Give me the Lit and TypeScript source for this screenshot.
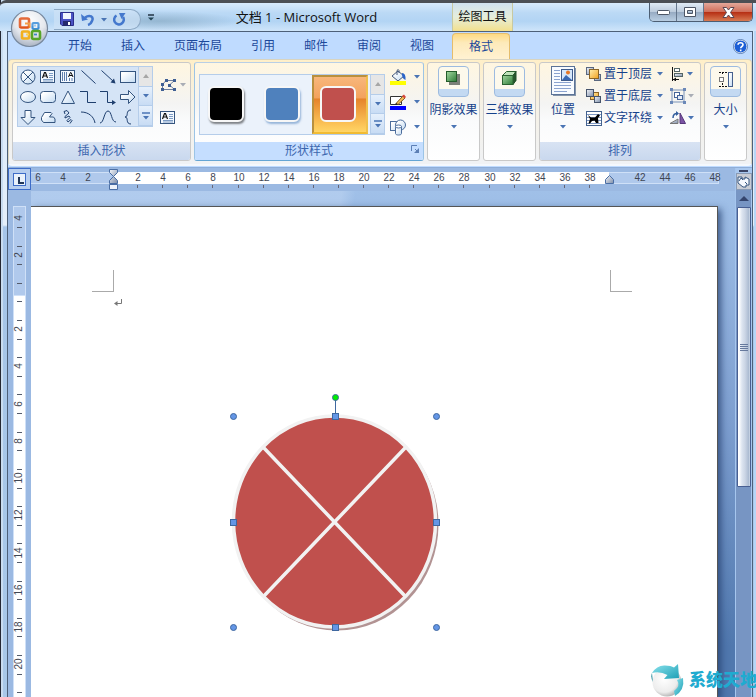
import { LitElement, html, svg, css } from "lit";
import { customElement } from "lit/decorators.js";

const INK = "#1f3f6e";
const defs = svg`<defs>
  <linearGradient id="f" x1="0" y1="0" x2="1" y2="1"><stop offset="0.2" stop-color="#fff"/><stop offset="1" stop-color="#c3dbf2"/></linearGradient>
  <linearGradient id="o" x1="0" y1="0" x2="1" y2="1"><stop offset="0" stop-color="#fff0b0"/><stop offset="1" stop-color="#f2a21f"/></linearGradient>
  <linearGradient id="g" x1="0" y1="0" x2="1" y2="1"><stop offset="0" stop-color="#f4f6fa"/><stop offset="1" stop-color="#7c8da8"/></linearGradient>
  <linearGradient id="n" x1="0" y1="0" x2="1" y2="1"><stop offset="0" stop-color="#a5d8a2"/><stop offset="1" stop-color="#2c7a35"/></linearGradient>
</defs>`;

const icon = (w: number, h: number, body: unknown) =>
  html`<svg width=${w} height=${h} viewBox="0 0 ${w} ${h}" aria-hidden="true">${defs}${body}</svg>`;

const arrow = (dim = false) =>
  html`<svg class="arrow" width="6" height="4" viewBox="0 0 6 4" aria-hidden="true"><path d="M0 0h6L3 3.5z" fill=${dim ? "#a9adb5" : "#4a74b4"}/></svg>`;

const textBox = svg`<rect x=".5" y="1.5" width="14" height="12" fill="#f4f9ff" stroke="#35557f"/>
  <path d="M9 4.5h4M9 6.5h4M9 8.5h4M3 10.5h10M3 12h10" stroke="#7d9cc4"/>
  <path d="M2.5 9L4.5 3.5h1L7.5 9M3.5 7h3" fill="none" stroke="#111" stroke-width="1.2"/>`;

const shapes: [string, unknown][] = [
  ["流程图: 汇总连接", svg`<circle cx="8" cy="8" r="7" fill="url(#f)" stroke="#35557f"/><path d="M3 3l10 10M13 3L3 13" stroke="#35557f"/>`],
  ["文本框", textBox],
  ["竖排文本框", svg`<rect x=".5" y="1.5" width="14" height="12" fill="#f4f9ff" stroke="#35557f"/><path d="M2.500 3v9M4.500 3v9M6.500 3v9M9.500 9v3M12 9v3" stroke="#5f7fae"/><path d="M8.500 8L10.500 3.500h.5L13 8M9 6.500h3.500" fill="none" stroke="#111"/>`],
  ["直线", svg`<path d="M1.500 1.500l14 13" stroke=${INK}/>`],
  ["箭头", svg`<path d="M1.500 1.500l12 11" stroke=${INK}/><path d="M15.500 14.500l-5-1 3.500-4z" fill=${INK}/>`],
  ["矩形", svg`<rect x=".5" y="2.500" width="15" height="11" fill="url(#f)" stroke="#35557f"/>`],
  ["椭圆", svg`<ellipse cx="8" cy="8" rx="7.500" ry="5.500" fill="url(#f)" stroke="#35557f"/>`],
  ["圆角矩形", svg`<rect x=".5" y="2.500" width="15" height="11" rx="3" fill="url(#f)" stroke="#35557f"/>`],
  ["等腰三角形", svg`<path d="M8 2L14.500 14.500h-13z" fill="url(#f)" stroke="#35557f"/>`],
  ["肘形连接符", svg`<path d="M0 2.500h7.500v11H16" fill="none" stroke=${INK}/>`],
  ["肘形箭头连接符", svg`<path d="M0 2.500h7.500v11H13" fill="none" stroke=${INK}/><path d="M16 13.500l-4 2.500v-5z" fill=${INK}/>`],
  ["右箭头", svg`<path d="M.5 5.500h8v-4l6.500 6.500-6.500 6.500v-4h-8z" fill="url(#f)" stroke="#35557f"/>`],
  ["下箭头", svg`<path d="M5 1.500h6v7h4L8 15.500 1 8.500h4z" fill="url(#f)" stroke="#35557f"/>`],
  ["任意多边形", svg`<path d="M3.500 13.500L1.500 11V8.500l3-5h6.500l1 1-2.500 3.500h4l1.500 2v3.500z" fill="url(#f)" stroke="#35557f"/>`],
  ["自由曲线", svg`<path d="M5 5L4 2.500 7 1.500 9 4 5 7.500v1.500l4-2 1 1.500-3 3 1 1.500 3-2.500 1 1-2 3" fill="none" stroke=${INK}/>`],
  ["弧形", svg`<path d="M1 3c8 0 13 5 14 11" fill="none" stroke=${INK}/>`],
  ["曲线", svg`<path d="M0 14C4 14 4 2 8 2s3 11 8 11" fill="none" stroke=${INK}/>`],
  ["左大括号", svg`<path d="M11 1C5 1 9 8 5 8c4 0 0 7 6 7" fill="none" stroke=${INK}/>`],
];

const spinner = () => html`<div class="spin">
  <button aria-label="上一行" class="off"><svg width="6" height="4" viewBox="0 0 6 4"><path d="M0 4h6L3 0z" fill="#a6a6a6"/></svg></button>
  <button aria-label="下一行">${arrow()}</button>
  <button aria-label="其他"><svg width="8" height="8" viewBox="0 0 8 8"><path d="M0 1h8" stroke="#4a74b4" stroke-width="1.500"/><path d="M1 4h6L4 7.500z" fill="#4a74b4"/></svg></button>
</div>`;

const ic = {
  edit: icon(18, 14, svg`<path d="M2.500 12V6.500L6 2.500h8.500L9.500 7l5 4.500H3" fill="none" stroke="#6d7f9e"/><g fill="#3f5f94"><rect x="1" y="5" width="3" height="3"/><rect x="5" y="1" width="3" height="3"/><rect x="13" y="1" width="3" height="3"/><rect x="8" y="6" width="3" height="3"/><rect x="1" y="10" width="3" height="3"/><rect x="13" y="10" width="3" height="3"/></g>`),
  fill: icon(17, 16, svg`<path d="M2 7l6-5 6 5-6 5z" fill="url(#f)" stroke="#44597c"/><path d="M7 6V1.500q1.500-2 2 0V4" fill="none" stroke="#44597c"/><path d="M12 4q4 0 3.500 7-3-1-3.500-5z" fill="#2c64c8"/><path d="M0 12h16v4H0z" fill="#ff0"/>`),
  line: icon(17, 16, svg`<path d="M.5 2.500h11v8H.5z" fill="#fff" stroke="#333"/><path d="M6 9.500L13 2l2 2-7 6.500z" fill="#f5c35a" stroke="#80531d"/><path d="M12 2l2-1.500L16 3l-1.500 1.500z" fill="#d5453b"/><path d="M5 11l1-2 2 1.500z" fill="#222"/><path d="M0 12h16v4H0z" fill="#00f"/>`),
  shape: icon(17, 17, svg`<rect x=".5" y="2.500" width="9" height="9" fill="url(#f)" stroke="#4c6d9c"/><circle cx="10.500" cy="6" r="5" fill="url(#f)" stroke="#4c6d9c"/><path d="M5.500 7.500v7c0 2 6 2 6 0v-7" fill="url(#f)" stroke="#4c6d9c"/><ellipse cx="8.500" cy="7.500" rx="3" ry="1.500" fill="#fff" stroke="#4c6d9c"/>`),
  shadow: icon(15, 15, svg`<rect x="3" y="3" width="11" height="11" fill="#7c8078"/><rect x=".5" y=".5" width="10" height="10" fill="url(#n)" stroke="#245c2b"/>`),
  cube: icon(15, 15, svg`<path d="M.5 4.500l4-4h9.500l-3 4z" fill="#bfe3ba" stroke="#2b6331"/><path d="M11 4.500L14 .5v9l-3 4z" fill="#27552c" stroke="#23502a"/><rect x=".5" y="4.500" width="10.500" height="9" fill="url(#n)" stroke="#2b6331"/>`),
  size: icon(16, 17, svg`<path d="M1 1.500h8M1 15.500h8M4.500 1v3M4.500 12v4" stroke="#111" stroke-dasharray="2 1"/><rect x="1.500" y="6.500" width="4" height="4" fill="#fff" stroke="#777"/><rect x="10.500" y="1.500" width="4" height="14" fill="url(#f)" stroke="#46608c"/>`),
  pos: icon(25, 31, svg`<rect x="2" y="2" width="23" height="28" fill="#8494aa"/><rect x=".5" y=".5" width="23" height="28" fill="#f8fbff" stroke="#5b7397"/><path d="M3 4.500h6M3 7.500h6M3 10.500h6M3 13.500h6M3 16.500h17M3 19.500h17M3 22.500h17M3 25.500h13" stroke="#8ba3cf"/><rect x="10.500" y="3.500" width="11" height="11" fill="#d5e7fb" stroke="#3f5c8c"/><circle cx="17" cy="6.500" r="2" fill="#e4782a"/><path d="M11 14l4-5 6 5z" fill="#3868b4"/>`),
  front: icon(16, 15, svg`<rect x=".5" y=".5" width="7" height="7" fill="url(#g)" stroke="#5a6880"/><rect x="8.500" y="7.500" width="6" height="6" fill="url(#g)" stroke="#5a6880"/><rect x="3.500" y="2.500" width="9" height="9" fill="url(#o)" stroke="#8b6526"/>`),
  back: icon(16, 15, svg`<rect x="4.500" y="3.500" width="8" height="7" fill="url(#o)" stroke="#8b6526"/><rect x=".5" y=".5" width="7" height="7" fill="url(#g)" stroke="#46546c"/><rect x="8.500" y="7.500" width="6" height="6" fill="url(#g)" stroke="#46546c"/>`),
  wrap: icon(16, 15, svg`<rect x=".5" y=".5" width="15" height="14" fill="#fff" stroke="#44628f"/><path d="M1 3.500h14M1 6.500h14M1 9.500h14M1 12.500h14" stroke="#7d97c2"/><path d="M2 4l3 2.500h4L12 3l2 1.500-2 2.500.5 5H10L8.500 9.500 6 10l-2 2.500H2.500L4 8z" fill="#000"/>`),
  align: icon(16, 14, svg`<path d="M2.500 0v14" stroke="#111"/><rect x="4.500" y="1.500" width="5" height="3" fill="#fff" stroke="#566"/><rect x="4.500" y="6.500" width="8" height="3" fill="url(#g)" stroke="#566"/><path d="M3 12.500h6" stroke="#111"/><path d="M3 12.500l3-2v4z" fill="#111"/>`),
  group: icon(17, 16, svg`<path d="M2 2h12v12H2z" fill="none" stroke="#7b93b9"/><rect x="4.500" y="4.500" width="5" height="5" fill="#fff" stroke="#46659a"/><rect x="7.500" y="7.500" width="5" height="4" fill="#e7eefa" stroke="#46659a"/><path d="M0 0h3v3H0zM13 0h3v3h-3zM0 13h3v3H0zM13 13h3v3h-3z" fill="#6b88b8"/>`),
  rotate: icon(17, 14, svg`<path d="M0 12.500L8 8v4.500z" fill="url(#g)" stroke="#777"/><path d="M10 12.500V2l5.500 10.500z" fill="#7c55a5" stroke="#56377a"/><path d="M3 7q0-5 5-4.500" fill="none" stroke="#35609e" stroke-width="1.500"/><path d="M6 0l3 2.500L6 5z" fill="#35609e"/>`),
};

const U = 12.55;
const hx = (n: number) => 113 + n * U;
const V = 18.61;

@customElement("app-root")
export class AppRoot extends LitElement {
  static styles = css`
    :host { display: flex; flex-direction: column; height: 100vh; overflow: hidden; position: relative; box-sizing: border-box;
      padding: 0 3px 0 7px; font: 12px/16px "Liberation Sans", "Noto Sans CJK SC", sans-serif; color: #15428b;
      background: linear-gradient(90deg, #252833 0 1px, #c9dcf0 1px 3px, transparent 3px calc(100% - 2px), #b6d6f6 calc(100% - 2px)),
        linear-gradient(#d3e7fb 0, #e4eef9 225px, #a6c5e9 227px, #a9c8e8); }
    * { box-sizing: border-box; }
    button { font: inherit; color: inherit; border: 0; padding: 0; margin: 0; background: none; display: flex; align-items: center; justify-content: center; white-space: nowrap; }
    svg { display: block; flex: none; }
    .title { display: flex; flex: none; height: 31px; margin: 0 -3px 0 -7px; padding-left: 54px; border-top: 3px solid #4b4f54;
      background: radial-gradient(ellipse 80px 10px at 160px 18px, #87a8c0aa 0, #87a8c000 100%), linear-gradient(#d7eafb 0, #bbd9f5 35%, #b2d4f4 65%, #cfe5fa); border-radius: 6px 0 0 0; }
    .qat { display: flex; align-items: center; height: 21px; width: 87px; margin-top: 6px; padding-left: 6px; border: 1px solid #8da9c5; border-left: 0; border-radius: 0 12px 12px 0; background: #cfe2f6aa; }
    .qat button + button { margin-left: 6px; }
    .more { width: 20px; height: 29px; }
    .name { flex: 0 0 291px; margin: 0; text-align: center; font: 13px/28px "Open Sans", "Noto Sans CJK SC", sans-serif; color: #111; }
    .ctx { width: 61px; text-align: center; line-height: 29px; color: #111; background: linear-gradient(#cfe1ee, #e6eedc 50%, #f3e08c); border: solid #c8c9a0; border-width: 0 1px; }
    .caps { display: flex; margin-left: auto; margin-right: 3px; height: 19px; border: 1px solid #4c5e73; border-top: 0; border-radius: 0 0 5px 5px; overflow: hidden; }
    .caps button { width: 27px; background: linear-gradient(#e0ebf5, #bccbdc 48%, #96aac2 50%, #b9cee2); border-right: 1px solid #64768c; }
    .caps .close { width: 48px; border: 0; background: linear-gradient(#e3a79a, #cf6f5b 48%, #b52c12 50%, #d77a52); }
    .orb { position: absolute; left: 10px; top: 9px; z-index: 2; }
    .win { flex: 1; min-height: 0; display: flex; flex-direction: column; border: 1px solid #4d6079; border-width: 1px 1px 0; background: #bfdbff; }
    .tabs { display: flex; flex: none; height: 27px; gap: 1px; padding: 1px 4px 0 46px; color: #1c489a; }
    .tabs button { padding: 0 14px; }
    .tabs .on { margin-left: 3px; padding: 0 16px; border: 1px solid #e5bd6c; border-bottom: 0; border-radius: 4px 4px 0 0; background: linear-gradient(#fdda83, #fdeaba 35%, #fff2d2); }
    .tabs .help { margin-left: auto; padding: 0; }
    .ribbon { display: flex; flex: none; gap: 3px; height: 107px; padding: 2px 3px 3px; border: 1px solid #d9d4c0; border-bottom: 2px solid #f4f8fd; border-radius: 4px; background: linear-gradient(#ffefc8, #f6f1e4 40%, #f0f2f5); }
    .grp { display: flex; flex-direction: column; border: 1px solid #c9c9c9; border-radius: 3px; background: linear-gradient(#fff6e0, #f4f4f3 42%, #fafbfc 60%, #fff); overflow: hidden; }
    .body { display: flex; flex: 1; padding: 3px 4px; }
    .lab { height: 18px; line-height: 18px; text-align: center; color: #3c66ae; background: linear-gradient(#d8e3f3, #c9d8ee); display: flex; justify-content: center; position: relative; }
    .hot { border-color: #b8cfe6 #9cc4e6 #64a5d4; }
    .hot .lab { background: #c5deff; }
    .launch { position: absolute; right: 3px; top: 3px; }
    .gal { display: flex; height: 61px; border: 1px solid #b5cdea; background: #d5e4f6; }
    .cells { display: grid; grid-template-columns: repeat(6, 20px); grid-auto-rows: 20px; }
    .spin { display: flex; flex-direction: column; width: 14px; }
    .spin button { flex: 1; border: 1px solid #b5cdea; border-width: 0 0 1px 1px; background: linear-gradient(#e6f0fc, #c8dcf4); }
    .spin .off { background: #e6e6e6; }
    .side { display: flex; flex-direction: column; align-items: flex-start; }
    .g1 .side { width: 26px; margin-left: 7px; padding-top: 12px; gap: 18px; }
    .side button, .pair button { gap: 2px; }
    .g2 .body { padding: 11px 3px 0 4px; }
    .g2 .gal { background: #ebf2fb; }
    .g2 .cells { grid-template-columns: repeat(3, 56px); grid-auto-rows: 59px; margin-right: 2px; }
    .g2 .cells button { padding: 0 4px 2px 0; }
    .sw { width: 36px; height: 36px; border: 2px solid #f7f7f7; border-radius: 6px; }
    .black { background: #000; box-shadow: 1px 2px 2px #0007; }
    .blue { background: #4f81bd; box-shadow: 1px 2px 2px #4f81bd88; }
    .red { background: #c0504d; }
    .cells .pick { border: 2px solid #b8903f; border-right-color: #efc14d; border-bottom-color: #f1bb33; background: linear-gradient(#f8b77c, #f3a25c 38%, #e5832b 40%, #fbc256 85%, #ffd566); }
    .g2 .side { width: 30px; margin-left: 5px; margin-top: -5px; gap: 9px; }
    .g2 .side button { gap: 7px; height: 16px; }
    .big { flex-direction: column; justify-content: flex-start; height: 72px; width: 51px; }
    .solo .body { padding: 3px 0; }
    .big .arrow { margin-top: 7px; }
    .big span { margin-top: 5px; }
    .tile { display: flex; justify-content: center; width: 31px; height: 31px; padding-top: 4px; border: 1px solid #9dbbe0; border-radius: 4px; background: linear-gradient(#fdf9ec 0 22px, #c3d9f2 22px); }
    .g6 .big { width: 41px; }
    .g5 .body { padding: 3px 6px 0 0; }
    .g5 .big { width: 46px; }
    .pair { display: grid; grid-template-columns: auto auto; grid-auto-rows: 22px; height: 66px; column-gap: 7px; margin-top: -3px; }
    .pair button { justify-content: flex-start; }
    .pair .arrow { margin-left: 3px; }
    .pair .tight .arrow { margin-left: -1px; }
    .main { flex: 1; min-height: 0; display: grid; grid-template: 23px 1fr / 23px 1fr 17px; margin-top: 1px; background: #9bb9e2; border-top: 1px solid #8faed8; }
    .tabsel { border: 1px solid #3d6cc8; background: #b5cdef; height: 22px; }
    .rule { overflow: hidden; min-width: 0; min-height: 0; }
    .rule text { font: 10px "Liberation Sans", sans-serif; fill: #3f4653; text-anchor: middle; }
    .scroll { grid-column: 3; grid-row: 1 / 3; display: flex; flex-direction: column; align-items: center; background: #7795c3; border-left: 1px solid #a6c6ee; border-right: 1px solid #a6c6ee; }
    .split { width: 100%; height: 5px; display: flex; justify-content: center; align-items: center; background: #a9c8ef; }
    .split::before { content: ""; width: 9px; height: 2px; background: #3a4566; }
    .toggle { width: 16px; height: 17px; background: #c8ccd4; border: 1px solid #8a9bb5; }
    .up { height: 17px; }
    .thumb { width: 14px; height: 280px; border: 1px solid #485f92; border-radius: 1px; background: linear-gradient(90deg, #fff 0 1px, #dce4f0 4px, #cbd5e5 7px, #a9b9d0 11px, #dde6f3); }
    .canvas { grid-column: 2; grid-row: 2; min-height: 0; padding: 15px 17px 0 0; display: flex; overflow: hidden;
      background: linear-gradient(100deg, #b9d1f0aa 0 44%, transparent 46%) 0 0 / 100% 16px no-repeat, linear-gradient(#a0c0e8 0, #7e9fd0 45%, #5078ae 90%); }
    .page { flex: 1; position: relative; background: #fff; border: 1px solid #555; border-width: 1px 1px 0 0; box-shadow: 3px 3px 7px #24406fcc; }
    .mark { position: absolute; top: 63px; width: 22px; height: 22px; border-bottom: 1px solid #aaa; }
    .ml { left: 61px; border-right: 1px solid #aaa; }
    .mr { right: 85px; border-left: 1px solid #aaa; }
    .ret { position: absolute; left: 83px; top: 92px; }
    .art { position: absolute; left: 189px; top: 183px; }
    .wm { position: absolute; right: 0; bottom: 0; z-index: 3; display: flex; align-items: center; gap: 4px; color: #1fabd0; font: 900 17px/29px "Noto Sans CJK SC", sans-serif; white-space: nowrap; }
    .wm span { padding-bottom: 4px; margin-right: -1px; }
  `;

  private big(i: unknown, label: string, tile = true) {
    return html`<button class="big">${tile ? html`<div class="tile">${i}</div>` : i}<span>${label}</span>${arrow()}</button>`;
  }

  private hRuler() {
    const nums = Array.from({ length: 28 }, (_, i) => i * 2 - 6).filter((n) => n !== 0 && n !== 40);
    return html`<svg width="704" height="22" viewBox="31 168 704 22" role="img" aria-label="水平标尺">${defs}
      <rect x="31" y="172" width="688" height="12" fill="#cfe0f7"/><rect x="31" y="173" width="687" height="10" fill="#b0c9ec"/>
      <rect x="113" y="172" width="496" height="12" fill="#fff"/>
      ${nums.map((n) => svg`<text x=${Math.round(hx(n))} y="181">${Math.abs(n)}</text>`)}
      ${nums.filter((n) => n > 0 && n < 40).map((n) => svg`<path d="M${Math.round(hx(n)) - 0.5} 185v3" stroke="#667"/>`)}
      <g fill="url(#g)" stroke="#4a6ea5"><path d="M109.500 169.500h8v3l-4 4 4 4v3h-8v-3l4-4-4-4z"/><path d="M109.500 184.500h8v5h-8z" fill="#eef3fa"/><path d="M605.500 183.500v-4l4-4 4 4v4z"/></g>
    </svg>`;
  }

  private vRuler() {
    const nums = [-4, -2, 2, 4, 6, 8, 10, 12, 14, 16, 18, 20];
    const ticks = Array.from({ length: 26 }, (_, i) => Math.round(226 + i * V) + 0.5);
    return html`<svg width="23" height="507" viewBox="8 190 23 507" role="img" aria-label="垂直标尺">
      <rect x="13" y="205" width="13" height="500" fill="#cfe0f7"/><rect x="14" y="206" width="11" height="88" fill="#b0c9ec"/><rect x="14" y="295" width="11" height="410" fill="#fff"/>
      ${nums.map((n) => { const y = Math.round(291 + n * V); return svg`<text x="22" y=${y} transform="rotate(-90 22 ${y})">${Math.abs(n)}</text>`; })}
      ${ticks.map((y) => svg`<path d="M17 ${y}h5" stroke="#555c6b"/>`)}
    </svg>`;
  }

  render() {
    return html`
      <header class="title">
        <div class="qat">
          <button aria-label="保存">${icon(15, 15, svg`<path d="M.5.500h13v13H2l-1.500-1.500z" fill="#4a52c4" stroke="#2c2f8c"/><path d="M3 1h8v6H3z" fill="#f3f6ff"/><path d="M3 9h8v5H3z" fill="#24286e"/><path d="M8 10h2v3H8z" fill="#fff"/>`)}</button>
          <button aria-label="撤消">${icon(14, 13, svg`<path d="M4 4.500C9 1 13 4 11 8q-1 3-4 4" fill="none" stroke="#4478cd" stroke-width="2.500"/><path d="M0 1l1 7 6-1.500z" fill="#4478cd"/>`)}</button>
          <button aria-label="撤消列表">${arrow()}</button>
          <button aria-label="重复">${icon(13, 13, svg`<path d="M3.500 2.500A4.800 4.800 0 1 0 10 4" fill="none" stroke="#4478cd" stroke-width="2.500"/><path d="M6 0h6.500l-4 6z" fill="#4478cd"/>`)}</button>
        </div>
        <button class="more" aria-label="自定义快速访问工具栏">${icon(6, 7, svg`<path d="M0 1h6" stroke="#234" stroke-width="1.500"/><path d="M0 3.500h6L3 6.500z" fill="#245"/>`)}</button>
        <h1 class="name">文档 1 - Microsoft Word</h1>
        <div class="ctx">绘图工具</div>
        <div class="caps">
          <button aria-label="最小化">${icon(13, 6, svg`<rect x=".5" y="1.500" width="12" height="4" rx="1" fill="#fff" stroke="#4d5665"/>`)}</button>
          <button aria-label="最大化">${icon(12, 10, svg`<path fill-rule="evenodd" d="M.5.500h11v9H.5zM3.500 3.500v3h5v-3z" fill="#fff" stroke="#4d5665"/>`)}</button>
          <button class="close" aria-label="关闭">${icon(13, 11, svg`<path d="M1 .5h3.500l2 2.500 2-2.500H12L8.500 5.500 12 10.500H8.500l-2-2.500-2 2.500H1l3.500-5z" fill="#fff" stroke="#5b4650"/>`)}</button>
        </div>
      </header>
      <button class="orb" aria-label="Office 按钮"><svg width="39" height="39" viewBox="0 0 39 39">
        <defs><radialGradient id="b" cx=".5" cy=".3" r=".7"><stop offset="0" stop-color="#fff"/><stop offset=".6" stop-color="#e2e5eb"/><stop offset="1" stop-color="#a9b3c2"/></radialGradient></defs>
        <circle cx="19.500" cy="19.500" r="18" fill="url(#b)" stroke="#77889d" stroke-width="1.200"/>
        <g fill="none" stroke-width="2.600">
          <rect x="10" y="9.500" width="9" height="9" rx="1.500" stroke="#e0541c"/>
          <rect x="22.500" y="14" width="6" height="6" rx="1" stroke="#3f8fd8" stroke-width="2.200"/>
          <rect x="12" y="22.500" width="7" height="7" rx="1" stroke="#f2b01e"/>
          <rect x="22" y="22" width="8" height="8" rx="1.500" stroke="#58a52a"/>
        </g><path d="M15 14.500h4.500v4.500" fill="none" stroke="#f2902c" stroke-width="1.800"/><path d="M25 17.500v-2" stroke="#83c0ee" stroke-width="1.800"/><path d="M16 25.500h3" stroke="#ffd24c" stroke-width="1.800"/><path d="M24 25.500h3" stroke="#3f86c4" stroke-width="1.800"/><path d="M2 20q17-6 35 0-1-17-18-18Q3 3 2 20" fill="#ffffff22"/>
      </svg></button>
      <div class="win">
        <nav class="tabs">
          ${["开始", "插入", "页面布局", "引用", "邮件", "审阅", "视图"].map((t) => html`<button>${t}</button>`)}
          <button class="on">格式</button>
          <button class="help" aria-label="帮助"><svg width="15" height="15" viewBox="0 0 15 15"><circle cx="7.500" cy="7.500" r="6.500" fill="#1d5fd6" stroke="#fff" stroke-width="1"/><circle cx="7.500" cy="7.500" r="7" fill="none" stroke="#5b7fb4"/><path d="M5 5.800C5 3 10 3 10 5.800c0 1.700-2.300 1.700-2.300 3.400M7.700 10.500v1.700" fill="none" stroke="#fff" stroke-width="1.600"/></svg></button>
        </nav>
        <section class="ribbon">
          <div class="grp g1"><div class="body">
            <div class="gal"><div class="cells">${shapes.map(([n, s]) => html`<button aria-label=${n}>${icon(16, 16, s)}</button>`)}</div>${spinner()}</div>
            <div class="side"><button aria-label="编辑形状">${ic.edit}${arrow(true)}</button><button aria-label="文本框">${icon(15, 15, textBox)}</button></div>
          </div><div class="lab">插入形状</div></div>
          <div class="grp g2 hot"><div class="body">
            <div class="gal"><div class="cells">
              <button aria-label="黑色样式"><div class="sw black"></div></button><button aria-label="蓝色样式"><div class="sw blue"></div></button><button class="pick" aria-label="红色样式"><div class="sw red"></div></button>
            </div>${spinner()}</div>
            <div class="side"><button aria-label="形状填充">${ic.fill}${arrow()}</button><button aria-label="形状轮廓">${ic.line}${arrow()}</button><button aria-label="更改形状">${ic.shape}${arrow()}</button></div>
          </div><div class="lab">形状样式<button class="launch" aria-label="更多形状样式">${icon(9, 9, svg`<path d="M.5 6V.5H6M4 4l3 3" fill="none" stroke="#5c7fb5"/><path d="M8 3v5H3z" fill="#5c7fb5"/>`)}</button></div></div>
          <div class="grp solo"><div class="body">${this.big(ic.shadow, "阴影效果")}</div></div>
          <div class="grp solo"><div class="body">${this.big(ic.cube, "三维效果")}</div></div>
          <div class="grp g5"><div class="body">
            ${this.big(ic.pos, "位置", false)}
            <div class="pair">
              <button>${ic.front}<span>置于顶层</span>${arrow()}</button><button class="tight" aria-label="对齐">${ic.align}${arrow()}</button>
              <button>${ic.back}<span>置于底层</span>${arrow()}</button><button class="tight" aria-label="组合">${ic.group}${arrow(true)}</button>
              <button>${ic.wrap}<span>文字环绕</span>${arrow()}</button><button class="tight" aria-label="旋转">${ic.rotate}${arrow()}</button>
            </div>
          </div><div class="lab">排列</div></div>
          <div class="grp solo g6"><div class="body">${this.big(ic.size, "大小")}</div></div>
        </section>
        <main class="main">
          <button class="tabsel" aria-label="制表符">${icon(13, 13, svg`<rect x=".5" y=".5" width="12" height="12" fill="#e9f1fb" stroke="#3d6cc8"/><path d="M6 4v6h5" fill="none" stroke="#1f3558" stroke-width="2"/>`)}</button>
          <div class="rule">${this.hRuler()}</div>
          <div class="rule">${this.vRuler()}</div>
          <div class="canvas"><article class="page">
            <div class="mark ml"></div><div class="mark mr"></div>
            <svg class="ret" width="8" height="8" viewBox="0 0 8 8"><path d="M7.500 0v4.500H2" fill="none" stroke="#777"/><path d="M0 4.500L3.500 2v5z" fill="#777"/></svg>
            <svg class="art" width="230" height="250" viewBox="220 390 230 250" role="img" aria-label="流程图: 汇总连接">
              <ellipse cx="337" cy="524.500" rx="101.500" ry="106" fill="#b29393"/>
              <ellipse cx="334.500" cy="521.500" rx="101" ry="105.500" fill="#c0504d" stroke="#f2f2f2" stroke-width="3.500"/>
              <path d="M263.500 447.500l142 149M405.500 447.500l-142 149" stroke="#f2f2f2" stroke-width="3.500"/>
              <path d="M335.500 400v14" stroke="#3f68a0"/>
              <g fill="#6496e6" stroke="#3f68a0">
                ${[[335, 416], [233, 522], [436, 522], [335, 627]].map(([x, y]) => svg`<rect x=${x - 2.5} y=${y - 2.5} width="6" height="6"/>`)}
                ${[[233.5, 416.5], [436.5, 416.5], [233.5, 627.5], [436.5, 627.5]].map(([x, y]) => svg`<circle cx=${x} cy=${y} r="3"/>`)}
                <circle cx="335.500" cy="397.500" r="3" fill="#0e0"/>
              </g>
            </svg>
          </article></div>
          <div class="scroll">
            <div class="split"></div>
            <button class="toggle" aria-label="标尺">${icon(13, 13, svg`<path d="M1 2h4v2h3V2l4 2v6H9v2H6L1 8z" fill="#f5f8fd" stroke="#35557f"/><path d="M2 6l2-3 2 2M8 7l2 2" fill="none" stroke="#35557f"/>`)}</button>
            <button class="up" aria-label="向上滚动">${icon(10, 5, svg`<path d="M0 5h10L5 0z" fill="#34456e"/>`)}</button>
            <button class="thumb" aria-label="滚动条">${icon(8, 8, svg`<path d="M0 1.500h8M0 3.500h8M0 5.500h8M0 7.500h8" stroke="#66799d"/>`)}</button>
          </div>
        </main>
      </div>
      <div class="wm"><svg width="34" height="33" viewBox="0 0 34 33">
        <defs><radialGradient id="w" cx=".4" cy=".4" r=".65"><stop offset="0" stop-color="#fff"/><stop offset=".7" stop-color="#ececec"/><stop offset="1" stop-color="#aaa"/></radialGradient><linearGradient id="c" x1="0" y1="0" x2="1" y2="1"><stop offset="0" stop-color="#8ce4ee"/><stop offset="1" stop-color="#1e9fb5"/></linearGradient></defs>
        <circle cx="16" cy="18" r="14.500" fill="url(#w)"/>
        <path d="M1 9Q6 1 14 1.500q6 0 9 2L27 0l1 14-15 1 3.500-4Q9 7 1 9z" fill="url(#c)"/><path d="M32 14q2 12-8 18l-1-5q7-5 3-11z" fill="url(#c)"/><path d="M1 9l1 9q-3-5-1-9" fill="#3f99a6"/>
      </svg><span>系统天地</span></div>`;
  }
}
